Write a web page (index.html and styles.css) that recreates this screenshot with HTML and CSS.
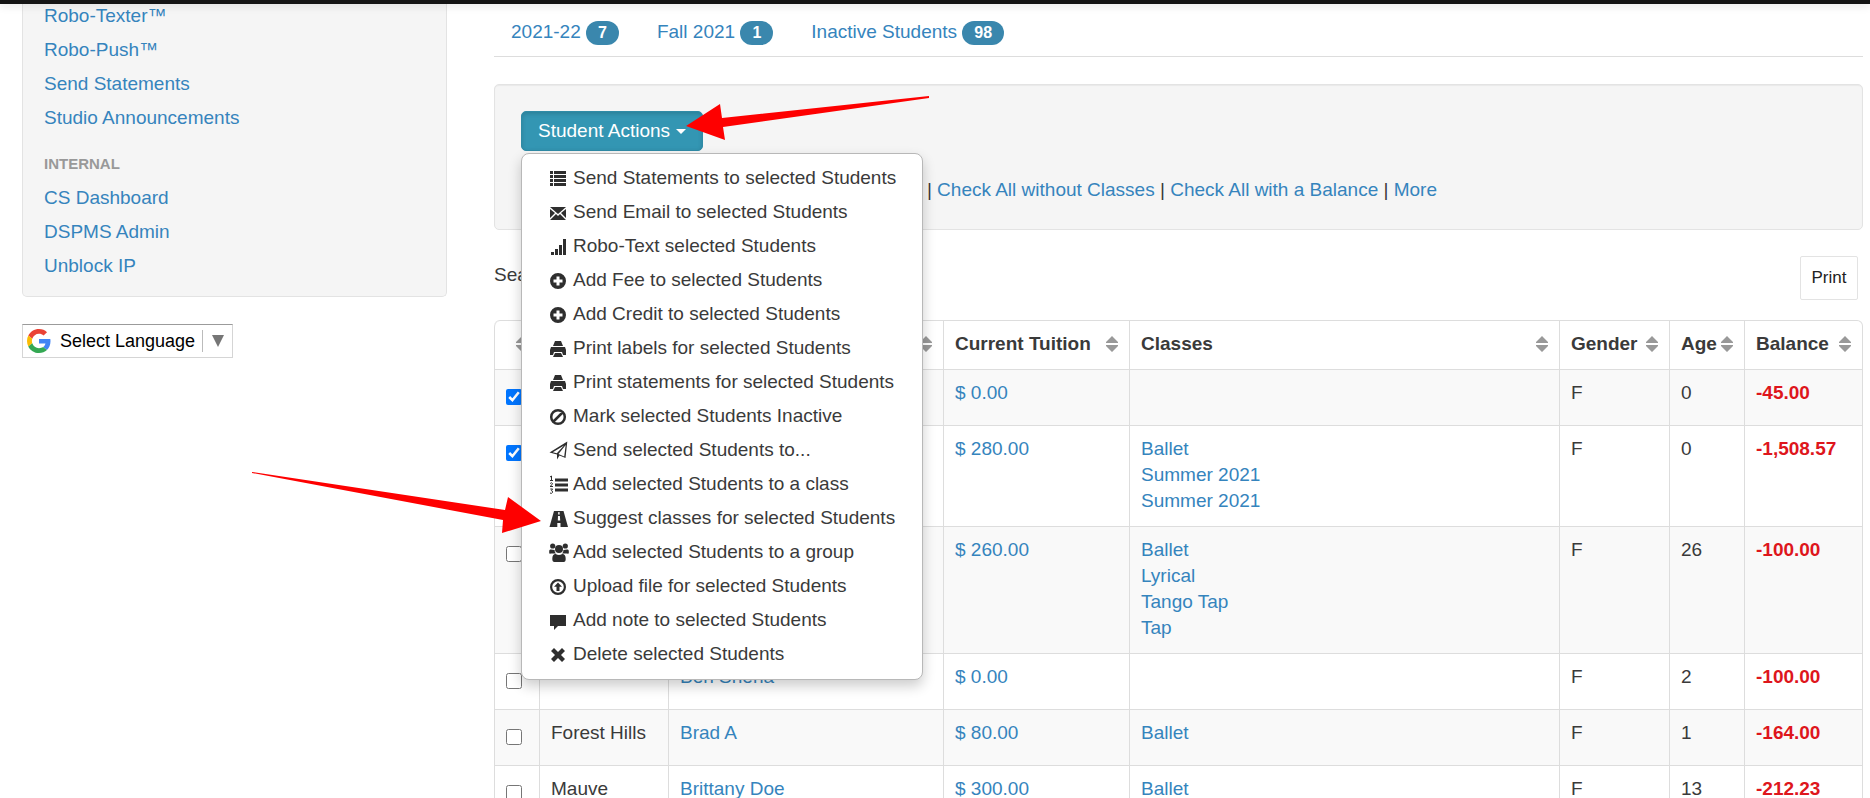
FILE: index.html
```html
<!DOCTYPE html>
<html lang="en">
  <head>
    <meta charset="UTF-8" />
    <title>Students</title>
    <link rel="stylesheet" href="styles.css">
  </head>
  <body>
    <!-- Icon sprites -->
    <svg class="sprites" aria-hidden="true">
      <symbol id="i-list" viewBox="-1 -3 20 20"><path d="M0 0h3v3H0zM4 0h12v3H4zM0 4h3v3H0zM4 4h12v3H4zM0 8h3v3H0zM4 8h12v3H4zM0 12h3v3H0zM4 12h12v3H4z"/></symbol>
      <symbol id="i-mail" viewBox="-1 -3 20 20"><path d="M0 2h16L8 9zM0 4l5 4-5 5zM16 4l-5 4 5 5zM0 15l6-6 2 2 2-2 6 6z"/></symbol>
      <symbol id="i-signal" viewBox="-1 -3 20 20"><path d="M1 13h3v3H1zM5 10h3v6H5zM9 6h3v10H9zM13 0h3v16h-3z"/></symbol>
      <symbol id="i-plus" viewBox="-1 -3 20 20"><path fill-rule="evenodd" d="M8 0a8 8 0 1 0 0 16A8 8 0 0 0 8 0zM6.500 3.500h3v3h3v3h-3v3h-3v-3h-3v-3h3z"/></symbol>
      <symbol id="i-print" viewBox="-1 -3 20 20"><path d="M5 0h6l2 5H3zM1 6h14l1 3v5h-3l-1-3H4l-1 3H0V9zM5 12h6l2 4H3z"/></symbol>
      <symbol id="i-ban" viewBox="-1 -3 20 20"><path d="M8 1.200a6.800 6.800 0 1 0 0 13.600A6.800 6.800 0 0 0 8 1.200zM3.500 12.500l9-9" fill="none" stroke="currentColor" stroke-width="2.500"/></symbol>
      <symbol id="i-plane" viewBox="-1 -3 20 20"><path d="M17.300-1.500L15.500 15l-6-2.500L7 16.500V11.500L-.5 9.500zM8.500 11l5.700 2.400L15.700 2zM2.800 9.200l4 1L14 2.600z" fill-rule="evenodd"/></symbol>
      <symbol id="i-ol" viewBox="-1 -3 20 20"><path d="M5 1.500h13V4.500H5zM5 6.500h13v3H5zM5 11.500h13v3H5z"/><path d="M0 0l1.500-1v4M0 3.500h3M.2 6.500Q1.500 5 2.500 6.500 2.600 7.500 0 9.500h3M.3 12H2.600L1.300 13.600Q3 13.800 2.500 15.500 1.500 17 0 16" fill="none" stroke="currentColor"/></symbol>
      <symbol id="i-road" viewBox="-1 -3 20 20"><path fill-rule="evenodd" d="M4 0h9.500l4.500 16h-7.500v-4H7.300v4H-.5zM8.300 1l-.2 2.500h1.600L9.500 1zM8 5l-.2 4.500h2.400L9.900 5z"/></symbol>
      <symbol id="i-group" viewBox="-1 -3 20 20"><circle cx="2.700" cy="1" r="2.600"/><circle cx="15.300" cy="1" r="2.600"/><circle cx="9" cy="4" r="4"/><path d="M-.8 8V6q0-2 1.800-1.500L4.600 5Q4.400 7 6 8.500H1Q-.8 9-.8 8zM18.800 8V6q0-2-1.800-1.500L13.400 5Q13.600 7 12 8.500h5q1.800.5 1.800-.5zM2.300 14q0-5 3.300-5Q9 11 12.200 9q3.500 0 3.500 5 0 3-2 3h-9.300q-2.100 0-2.100-3z"/></symbol>
      <symbol id="i-upload" viewBox="-1 -3 20 20"><circle cx="8" cy="8" r="6.900" fill="none" stroke="currentColor" stroke-width="2.200"/><path d="M8 3.500l4 4.300H9.500V12h-3V7.800H4z"/></symbol>
      <symbol id="i-note" viewBox="-1 -3 20 20"><path d="M0 2h16v11H8l-4 4v-4H0z"/></symbol>
      <symbol id="i-remove" viewBox="-1 -3 20 20"><path d="M4 1l4 4 4-4 3 3-4 4 4 4-3 3-4-4-4 4-3-3 4-4-4-4z"/></symbol>
      <symbol id="i-sort" viewBox="0 0 12 16"><path d="M6 0l6 6v1H0V6zM0 9h12v1l-6 6-6-6z"/></symbol>
    </svg>

    <div class="topbar"></div>

    <div class="container">
      <div class="side">
        <nav class="sidebar">
          <a href="#">Robo-Texter™</a>
          <a href="#">Robo-Push™</a>
          <a href="#">Send Statements</a>
          <a href="#">Studio Announcements</a>
          <h5>INTERNAL</h5>
          <a href="#">CS Dashboard</a>
          <a href="#">DSPMS Admin</a>
          <a href="#">Unblock IP</a>
        </nav>

        <a href="#" class="translate">
          <svg class="google" viewBox="0 0 48 48" aria-hidden="true">
            <path fill="#ea4335" d="M24 9.500c3.540 0 6.710 1.220 9.210 3.600l6.850-6.850C35.900 2.380 30.470 0 24 0 14.620 0 6.510 5.380 2.560 13.220l7.980 6.190C12.430 13.720 17.740 9.500 24 9.500z"/>
            <path fill="#4285f4" d="M46.980 24.550c0-1.570-.15-3.090-.38-4.550H24v9.020h12.940c-.58 2.960-2.260 5.480-4.780 7.180l7.730 6c4.510-4.180 7.090-10.360 7.090-17.650z"/>
            <path fill="#fbbc05" d="M10.530 28.590c-.48-1.450-.76-2.990-.76-4.590s.27-3.140.76-4.590l-7.980-6.190C.92 16.460 0 20.120 0 24c0 3.880.92 7.540 2.560 10.780l7.970-6.190z"/>
            <path fill="#34a853" d="M24 48c6.480 0 11.930-2.130 15.890-5.810l-7.730-6c-2.150 1.450-4.920 2.300-8.160 2.300-6.260 0-11.570-4.220-13.470-9.910l-7.980 6.190C6.510 42.620 14.620 48 24 48z"/>
          </svg>
          <span>Select Language</span>
          <span class="arrow"><svg viewBox="0 0 12 12" aria-hidden="true"><path d="M0 0h12L6 12z"/></svg></span>
        </a>
      </div>

      <div class="main">
        <div class="tabs">
          <a href="#">2021-22 <span class="badge">7</span></a>
          <a href="#">Fall 2021 <span class="badge">1</span></a>
          <a href="#">Inactive Students <span class="badge">98</span></a>
        </div>

        <div class="well">
          <div class="dropdown">
            <button type="button" class="btn">Student Actions <span class="caret"></span></button>
            <div class="menu">
              <a href="#"><svg><use href="#i-list"/></svg>Send Statements to selected Students</a>
              <a href="#"><svg><use href="#i-mail"/></svg>Send Email to selected Students</a>
              <a href="#"><svg><use href="#i-signal"/></svg>Robo-Text selected Students</a>
              <a href="#"><svg><use href="#i-plus"/></svg>Add Fee to selected Students</a>
              <a href="#"><svg><use href="#i-plus"/></svg>Add Credit to selected Students</a>
              <a href="#"><svg><use href="#i-print"/></svg>Print labels for selected Students</a>
              <a href="#"><svg><use href="#i-print"/></svg>Print statements for selected Students</a>
              <a href="#"><svg><use href="#i-ban"/></svg>Mark selected Students Inactive</a>
              <a href="#"><svg><use href="#i-plane"/></svg>Send selected Students to...</a>
              <a href="#"><svg><use href="#i-ol"/></svg>Add selected Students to a class</a>
              <a href="#"><svg><use href="#i-road"/></svg>Suggest classes for selected Students</a>
              <a href="#"><svg><use href="#i-group"/></svg>Add selected Students to a group</a>
              <a href="#"><svg><use href="#i-upload"/></svg>Upload file for selected Students</a>
              <a href="#"><svg><use href="#i-note"/></svg>Add note to selected Students</a>
              <a href="#"><svg><use href="#i-remove"/></svg>Delete selected Students</a>
            </div>
          </div>
          <div class="checks">
            <a href="#">Check All</a> | <a href="#">Uncheck All</a> | <a href="#">Check All with Classes</a> |
            <a href="#">Check All without Classes</a> | <a href="#">Check All with a Balance</a> | <a href="#">More</a>
          </div>
        </div>

        <div class="toolbar">
          <label>Search: <input type="text" class="search"></label>
          <button type="button" class="print">Print</button>
        </div>

        <table>
          <colgroup>
            <col class="c-check"><col class="c-location"><col class="c-name"><col class="c-tuition">
            <col><col class="c-gender"><col class="c-age"><col class="c-balance">
          </colgroup>
          <thead>
            <tr>
              <th><div><span></span><svg><use href="#i-sort"/></svg></div></th>
              <th><div><span></span><svg><use href="#i-sort"/></svg></div></th>
              <th><div><span></span><svg><use href="#i-sort"/></svg></div></th>
              <th><div>Current Tuition<svg><use href="#i-sort"/></svg></div></th>
              <th><div>Classes<svg><use href="#i-sort"/></svg></div></th>
              <th><div>Gender<svg><use href="#i-sort"/></svg></div></th>
              <th><div>Age<svg><use href="#i-sort"/></svg></div></th>
              <th><div>Balance<svg><use href="#i-sort"/></svg></div></th>
            </tr>
          </thead>
          <tbody>
            <tr>
              <td><input type="checkbox" aria-label="Select student" checked></td>
              <td></td>
              <td></td>
              <td><a href="#">$ 0.00</a></td>
              <td></td>
              <td>F</td>
              <td>0</td>
              <td class="owed">-45.00</td>
            </tr>
            <tr>
              <td><input type="checkbox" aria-label="Select student" checked></td>
              <td></td>
              <td></td>
              <td><a href="#">$ 280.00</a></td>
              <td><a href="#">Ballet</a><br><a href="#">Summer 2021</a><br><a href="#">Summer 2021</a></td>
              <td>F</td>
              <td>0</td>
              <td class="owed">-1,508.57</td>
            </tr>
            <tr>
              <td><input type="checkbox" aria-label="Select student"></td>
              <td></td>
              <td></td>
              <td><a href="#">$ 260.00</a></td>
              <td><a href="#">Ballet</a><br><a href="#">Lyrical</a><br><a href="#">Tango Tap</a><br><a href="#">Tap</a></td>
              <td>F</td>
              <td>26</td>
              <td class="owed">-100.00</td>
            </tr>
            <tr>
              <td><input type="checkbox" aria-label="Select student"></td>
              <td></td>
              <td><a href="#">Ben Shena</a></td>
              <td><a href="#">$ 0.00</a></td>
              <td></td>
              <td>F</td>
              <td>2</td>
              <td class="owed">-100.00</td>
            </tr>
            <tr>
              <td><input type="checkbox" aria-label="Select student"></td>
              <td>Forest Hills</td>
              <td><a href="#">Brad A</a></td>
              <td><a href="#">$ 80.00</a></td>
              <td><a href="#">Ballet</a></td>
              <td>F</td>
              <td>1</td>
              <td class="owed">-164.00</td>
            </tr>
            <tr>
              <td><input type="checkbox" aria-label="Select student"></td>
              <td>Mauve</td>
              <td><a href="#">Brittany Doe</a></td>
              <td><a href="#">$ 300.00</a></td>
              <td><a href="#">Ballet</a></td>
              <td>F</td>
              <td>13</td>
              <td class="owed">-212.23</td>
            </tr>
          </tbody>
        </table>
      </div>
    </div>

    <!-- Red pointer arrows drawn over the page -->
    <svg class="pointers" viewBox="0 0 940 560" aria-hidden="true">
      <path d="M686 126l34-22 2 14 207-22v2l-206 29 2 13z"/>
      <path d="M541 521l-39 12 1-13L252 473v-1l253 38 3-13z"/>
    </svg>
  </body>
</html>
```
FILE: styles.css
```css
* {
  box-sizing: border-box;
}

html {
  overflow: hidden;
}

body {
  margin: 0;
  height: 100vh;
  overflow: hidden;
  font-family: "Liberation Sans", Arial, sans-serif;
  font-size: 19px;
  line-height: 26px;
  color: #3a3a3a;
  background: #fff;
}

a {
  color: #3584bd;
  text-decoration: none;
}

.sprites {
  display: none;
}

.topbar {
  position: relative;
  height: 4px;
  background: #151515;
  box-shadow: 0 1px 10px rgba(0, 0, 0, 0.15);
  z-index: 5;
}

.container {
  display: flex;
  gap: 47px;
  padding: 0 7px 0 22px;
}

/* Left column */
.side {
  flex: 0 0 425px;
}

.sidebar {
  padding: 0 21px 8px;
  background: #f5f5f5;
  border: 1px solid #e3e3e3;
  border-top: 0;
  border-radius: 0 0 5px 5px;
}

.sidebar a {
  display: block;
  height: 34px;
  line-height: 24px;
}

.sidebar h5 {
  margin: 11px 0 9px;
  font-size: 15px;
  line-height: 26px;
  color: #999;
}

.translate {
  display: inline-flex;
  align-items: center;
  margin-top: 27px;
  padding: 4px 8px 4px 4px;
  border: 1px solid #d5d5d5;
  border-top-color: #9b9b9b;
  font-size: 18px;
  line-height: 24px;
  color: #000;
}

.google {
  width: 24px;
  height: 24px;
  margin-right: 9px;
}

.arrow {
  display: flex;
  align-items: center;
  height: 22px;
  margin-left: 7px;
  padding-left: 9px;
  border-left: 1px solid #bbb;
}

.arrow svg {
  width: 12px;
  height: 12px;
  fill: #767676;
}

/* Main column */
.main {
  flex: 1;
  min-width: 0;
}

.tabs {
  display: flex;
  padding: 15px 0 11px;
  border-bottom: 1px solid #ddd;
}

.tabs a {
  padding: 0 17px;
  margin-right: 4px;
}

.badge {
  display: inline-block;
  padding: 0 12px;
  border-radius: 12px;
  background: #3a87ad;
  color: #fff;
  font-size: 16px;
  font-weight: bold;
  line-height: 24px;
}

.well {
  margin-top: 27px;
  padding: 26px;
  background: #f5f5f5;
  border: 1px solid #e3e3e3;
  border-radius: 5px;
  box-shadow: inset 0 1px 1px rgba(0, 0, 0, 0.05);
}

.dropdown {
  position: relative;
}

.btn {
  display: flex;
  align-items: center;
  gap: 6px;
  height: 40px;
  padding: 0 16px;
  border: 1px solid #2f8ba6;
  border-radius: 5px;
  background: #3396b3;
  box-shadow: inset 0 2px 4px rgba(0, 0, 0, 0.15);
  color: #fff;
  font: inherit;
}

.caret {
  border: 5px solid transparent;
  border-top-color: #fff;
  border-bottom: 0;
}

.menu {
  position: absolute;
  top: 42px;
  left: 0;
  width: 402px;
  padding: 7px 0 8px;
  background: #fff;
  border: 1px solid #b8b8b8;
  border-radius: 8px;
  box-shadow: 0 6px 13px rgba(0, 0, 0, 0.2);
  z-index: 10;
}

.menu a {
  display: flex;
  align-items: center;
  height: 34px;
  padding-left: 27px;
  color: #3a3a3a;
  white-space: nowrap;
}

.menu svg {
  width: 20px;
  height: 20px;
  margin-right: 4px;
  overflow: visible;
  color: #2e2e2e;
  fill: currentColor;
}

.menu symbol,
.sprites symbol {
  overflow: visible;
}

.checks {
  margin-top: 26px;
}

.toolbar {
  display: flex;
  justify-content: space-between;
  align-items: center;
  margin: 26px 5px 20px 0;
}

.search {
  width: 260px;
  height: 34px;
  border: 1px solid #ccc;
}

.toolbar label {
  height: 38px;
}

.print {
  width: 58px;
  height: 44px;
  padding: 0;
  border: 1px solid #e3e3e3;
  border-radius: 2px;
  background: #fff;
  color: #222;
  font: inherit;
  font-size: 17px;
}

/* Student table */
table {
  width: 100%;
  table-layout: fixed;
  border: 1px solid #ddd;
  border-width: 1px 1px 1px 0;
  border-collapse: separate;
  border-spacing: 0;
  border-radius: 6px;
}

.c-check {
  width: 45px;
}

.c-location {
  width: 129px;
}

.c-name {
  width: 275px;
}

.c-tuition {
  width: 186px;
}

.c-gender {
  width: 110px;
}

.c-age {
  width: 75px;
}

.c-balance {
  width: 118px;
}

th,
td {
  border-left: 1px solid #ddd;
  padding: 10px 11px 12px;
  text-align: left;
  vertical-align: top;
}

td {
  border-top: 1px solid #ddd;
}

th:first-child {
  border-top-left-radius: 6px;
}

th div {
  display: flex;
  justify-content: space-between;
  align-items: center;
  height: 26px;
}

th svg {
  flex: none;
  width: 12px;
  height: 16px;
  fill: #999;
}

tbody tr:nth-child(odd) td {
  background: #f9f9f9;
}

td input {
  display: block;
  width: 16px;
  height: 16px;
  margin: 9px 0 8px;
}

.owed {
  color: #de161c;
  font-weight: bold;
}

.pointers {
  position: absolute;
  top: 0;
  left: 0;
  width: 940px;
  height: 560px;
  fill: #fe0000;
  pointer-events: none;
  z-index: 20;
}
```
